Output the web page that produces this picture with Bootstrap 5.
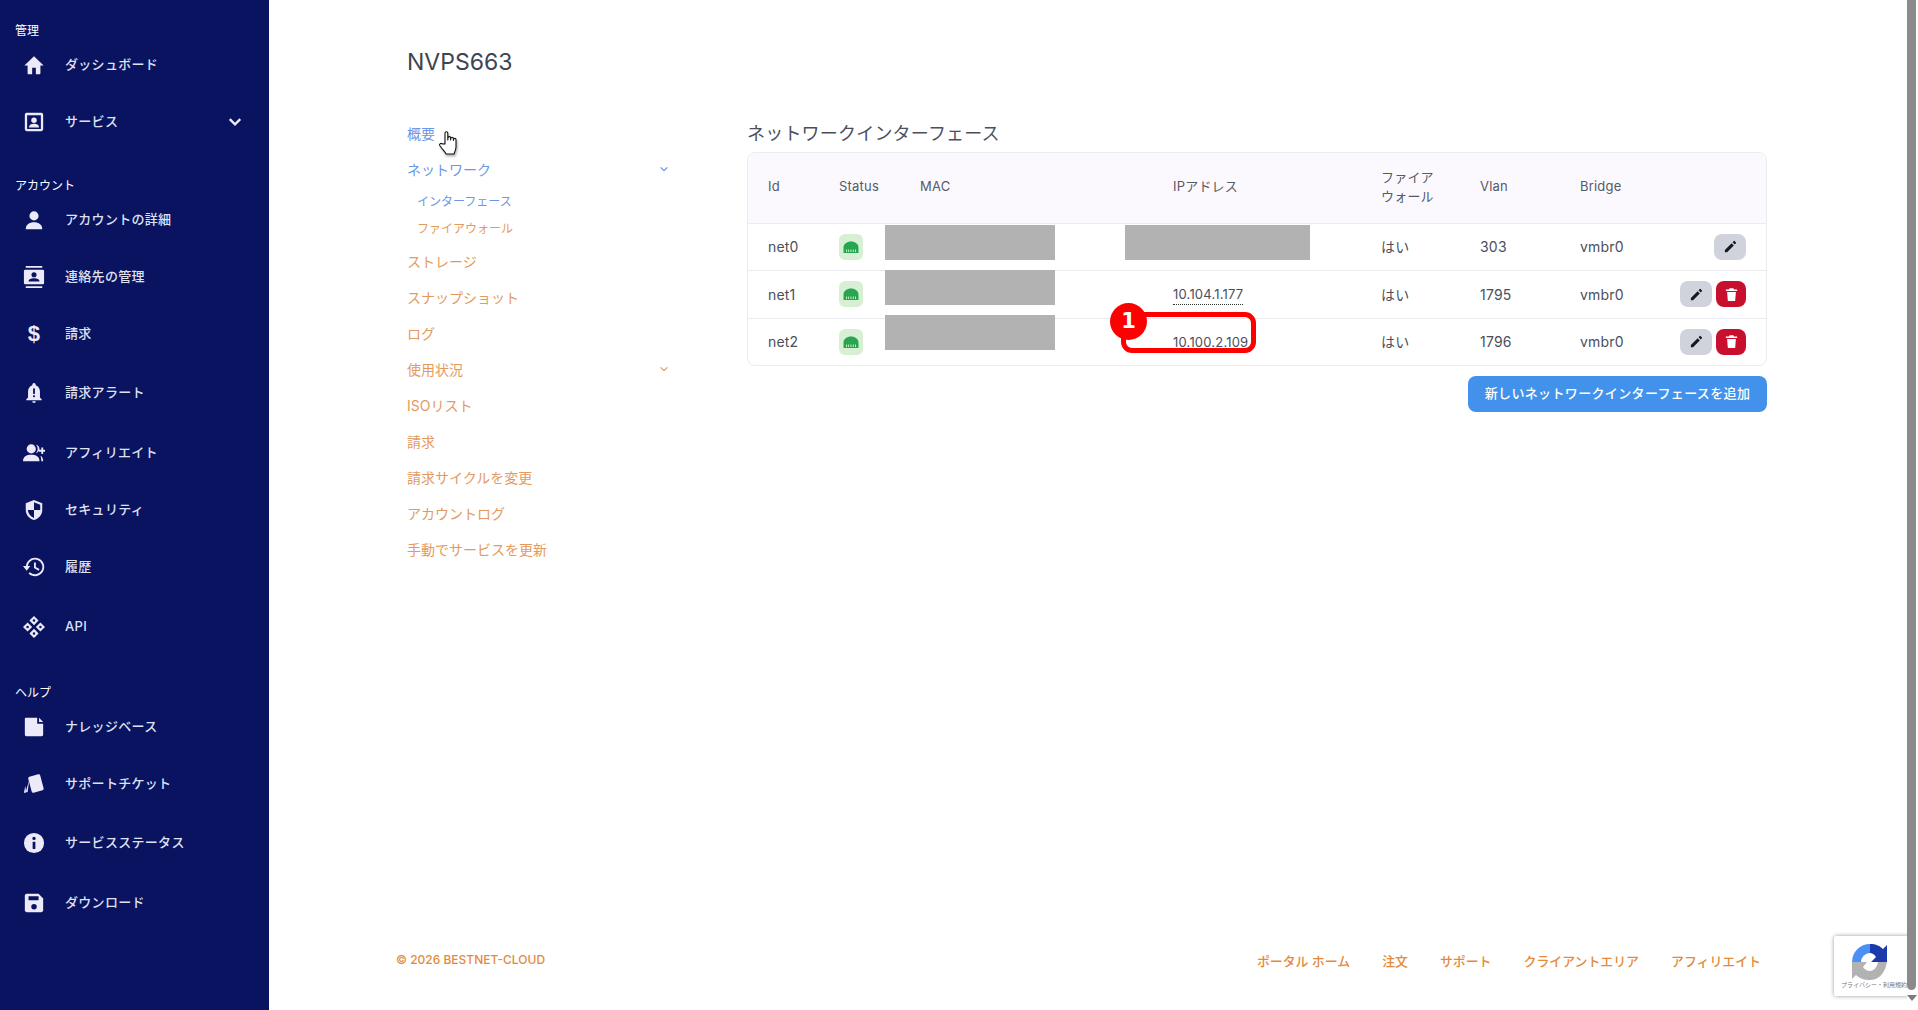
<!DOCTYPE html>
<html lang="ja">
<head>
<meta charset="utf-8">
<title>NVPS663</title>
<link href="https://cdn.jsdelivr.net/npm/bootstrap@5.3.0/dist/css/bootstrap.min.css" rel="stylesheet">
<style>
html,body{height:1010px;overflow:hidden}
body{font-family:Inter,"Noto Sans CJK JP",sans-serif;font-size:14px;color:#4b4f5c;background:#fff}
.app-root{height:1010px;position:relative}
.side-bar{width:269px;flex:none;background:#09135f;padding-top:21px;color:#dfe1f3}
.sb-label{height:20px;line-height:20px;font-size:12px;padding-left:15px;color:#fff}
.sb-label-gap{margin-top:31px}
.sb-label-gap2{margin-top:33px}
.sb-item{height:46px;margin-top:11px;padding-left:23px;font-size:13px;letter-spacing:.3px;font-weight:500;color:#dfe1f3;text-decoration:none}
.sb-item:hover{color:#fff}
.sb-first{margin-top:1px}
.sb-wide{margin-top:14px}
.sb-m13{margin-top:13px}
.sb-ico{width:22px;height:22px;margin-right:20px;flex:none;fill:#eceaf8}
.sb-chev{width:14px;height:14px;margin-left:auto;margin-right:27px;fill:none;stroke:#eceaf8;stroke-width:4}
.sb-dollar{width:22px;margin-right:20px;text-align:center;font-size:22px;font-weight:700;line-height:22px;color:#eceaf8;font-family:"Liberation Sans",sans-serif}
.cut{fill:#09135f}
.main-area{min-width:0}
.top-zone{padding:48px 0 0 138px}
.page-title{font-size:23px;line-height:29px;font-weight:400;margin:0 0 38px;color:#3f4451}
.side-menu{width:262px;margin-right:78px;flex:none}
.menu-link{height:36px;font-size:14px;color:#e39a5f;text-decoration:none}
.menu-link:hover{color:#e39a5f}
.menu-sub{height:28px;padding-left:10px;font-size:12px;color:#e39a5f;text-decoration:none}
.menu-sub:hover{color:#e39a5f}
.menu-sub-first{padding-top:1px}
.is-on,.is-on:hover{color:#6a98e6}
.menu-chev{width:10px;height:10px;margin-left:auto;fill:none;stroke:currentColor;stroke-width:1.5}
.right-col{width:1020px;padding-top:6px}
.sect-title{font-size:18px;line-height:26px;margin:0 0 5px;font-weight:400;color:#4b4f5c;letter-spacing:.2px}
.tbl-frame{border:1px solid #ebebf1;border-radius:8px;overflow:hidden}
.net-table{table-layout:fixed;width:100%;margin:0;--bs-table-color:#4b4f5c;font-size:14px;letter-spacing:.2px}
.net-table th{font-size:13px;font-weight:400;background:#fbf9fe;height:70px;padding:0 0 2px;line-height:19px;vertical-align:middle;border-bottom:1px solid #ebebf1;color:#555a67}
.net-table td{padding:0;vertical-align:middle;border-bottom:1px solid #ebebf1;height:48px}
.net-table tr.row-a td{height:47px}
.net-table tr:last-child td{border-bottom:0;height:47px}
.c-id{width:91px;padding-left:20px!important}
.c-st{width:81px}
.c-mac{width:253px}
.c-ip{width:208px}
.c-fw{width:99px}
.c-vl{width:100px}
.c-br{width:100px}
.ip-dot{border-bottom:1px dotted #333;padding-bottom:2px;font-size:13px}
.ip-plain{font-size:13px}
.stat-box{width:24px;height:26px;background:#d7f0d4;border-radius:6px}
.stat-box svg{width:18px;height:16px;fill:#27a651}
.act-wrap{gap:4px;padding-right:20px}
.act-edit,.act-del{height:26px;padding:0;border:0;border-radius:8px}
.act-edit{width:32px;background:#d1d3dc}
.act-del{width:30px;background:#c8102e}
.act-edit:hover{background:#d1d3dc}
.act-del:hover{background:#c8102e}
.act-edit svg,.act-del svg{width:15px;height:15px}
.act-edit svg{fill:#17181f}
.act-del svg{fill:#fff}
.add-btn{margin-top:10px;height:36px;width:299px;padding:0;background:#4292eb;border:0;border-radius:8px;color:#fff;font-size:13px;letter-spacing:.35px;font-weight:500}
.add-btn:hover{background:#4292eb;color:#fff}
.foot-bar{margin-top:auto;padding:0 146px 38px 127px;font-size:12px;font-weight:500;color:#e58a3c;line-height:20px}
.foot-links{gap:32px;font-size:12.9px;margin-top:5px}
.foot-links a{color:#e58a3c;text-decoration:none}
.scroll-col{width:11px;flex:none;background:#fff;position:relative;z-index:3}
.scroll-thumb{width:9px;height:990px;background:#8b8b8b;border-radius:0 0 5px 5px}
.scroll-arrow{width:0;height:0;margin:5px 0 0 0;border-left:5px solid transparent;border-right:5px solid transparent;border-top:6px solid #7c7c7c}
.mask{position:absolute;background:#b2b2b2}
.m1{left:885px;top:225px;width:170px;height:35px}
.m2{left:885px;top:270px;width:170px;height:35px}
.m3{left:885px;top:315px;width:170px;height:35px}
.m4{left:1125px;top:225px;width:185px;height:35px}
.note-box{position:absolute;left:1121px;top:312px;width:135px;height:41px;border:5.5px solid #f00;border-radius:11px}
.note-num{position:absolute;left:1110px;top:303px;width:37px;height:37px;border-radius:50%;background:#f00;color:#fff;font-family:"DejaVu Sans",sans-serif;font-weight:700;font-size:21px;line-height:37px;text-align:center}
.hand{position:absolute;left:438px;top:130px;width:22px;height:26px;filter:drop-shadow(1px 2px 1px rgba(0,0,0,.3))}
.rc-badge{position:absolute;left:1834px;top:936px;width:84px;height:60px;background:#fff;box-shadow:0 0 4px rgba(0,0,0,.4);border-radius:2px;z-index:2}
.rc-badge svg{display:block;width:38px;height:38px;margin:7px 0 0 17px}
.rc-text{font-size:6px;line-height:8px;color:#777;padding-left:7px;margin-top:0;white-space:nowrap}
</style>
</head>
<body>
<div class="app-root d-flex">
<aside class="side-bar">
  <div class="sb-label">管理</div>
  <a href="#" class="sb-item sb-first d-flex align-items-center"><svg class="sb-ico" viewBox="0 0 24 24"><path d="M12 2.500 1.500 12.500H5V21a1 1 0 0 0 1 1h4v-7h4v7h4a1 1 0 0 0 1-1v-8.500h3.500z"/></svg>ダッシュボード</a>
  <a href="#" class="sb-item d-flex align-items-center"><svg class="sb-ico" viewBox="0 0 24 24"><path fill-rule="evenodd" d="M4 2h16a2 2 0 0 1 2 2v16a2 2 0 0 1-2 2H4a2 2 0 0 1-2-2V4a2 2 0 0 1 2-2zm.500 2.500v15h15v-15z"/><circle cx="12" cy="10" r="3"/><path d="M6.500 18c0-2.800 2.500-4 5.500-4s5.500 1.200 5.500 4z"/></svg>サービス<svg class="sb-chev" viewBox="0 0 24 24"><path d="M3 7l9 9 9-9"/></svg></a>
  <div class="sb-label sb-label-gap">アカウント</div>
  <a href="#" class="sb-item sb-first d-flex align-items-center"><svg class="sb-ico" viewBox="0 0 24 24"><circle cx="12" cy="7.500" r="5"/><path d="M3 22c0-5 4-7.500 9-7.500s9 2.500 9 7.500z"/></svg>アカウントの詳細</a>
  <a href="#" class="sb-item d-flex align-items-center"><svg class="sb-ico" viewBox="0 0 24 24"><path d="M3 0h18v2H3zM3 22h18v2H3z"/><rect x="1" y="4" width="22" height="16" rx="1.500"/><circle class="cut" cx="12" cy="9.500" r="2.800"/><path class="cut" d="M6 17c0-2.500 2.700-3.600 6-3.600s6 1.100 6 3.600z"/></svg>連絡先の管理</a>
  <a href="#" class="sb-item d-flex align-items-center"><span class="sb-dollar">$</span>請求</a>
  <a href="#" class="sb-item sb-m13 d-flex align-items-center"><svg class="sb-ico" viewBox="0 0 24 24"><path d="M12 1a1.800 1.800 0 0 0-1.800 1.800v.8C7 4.600 5.500 7.500 5.500 10.500V17l-2 2v1h17v-1l-2-2v-6.500c0-3-1.500-5.900-4.700-6.900v-.8A1.800 1.800 0 0 0 12 1zM10 21a2 2 0 0 0 4 0z"/><rect class="cut" x="11" y="7" width="2" height="6"/><rect class="cut" x="11" y="14.500" width="2" height="2"/></svg>請求アラート</a>
  <a href="#" class="sb-item sb-wide d-flex align-items-center"><svg class="sb-ico" viewBox="0 0 24 24"><circle cx="9" cy="7.500" r="5"/><path d="M0 21c0-5 4-7 9-7s9 2 9 7z"/><path d="M14 2.800c2.500.8 4 2.700 4 4.700s-1.500 4-4 4.700c1.300-1.300 2-2.900 2-4.700s-.7-3.400-2-4.700zM19 15c2 1 3 3 3 6h-2c0-2.500-.5-4.500-1-6zM20 6h2v2.500h2.500v2H22V13h-2v-2.500h-2.500v-2H20z"/></svg>アフィリエイト</a>
  <a href="#" class="sb-item d-flex align-items-center"><svg class="sb-ico" viewBox="0 0 24 24"><path fill-rule="evenodd" d="M12 1 3 4.500V12c0 5.500 4 9.500 9 11 5-1.500 9-5.500 9-11V4.500zM12 3.500l6.800 2.700V12H12zM5.200 12H12v8.700c-3.500-1.300-6.200-4.500-6.800-8.700z"/></svg>セキュリティ</a>
  <a href="#" class="sb-item d-flex align-items-center"><svg class="sb-ico" viewBox="0 0 24 24"><path d="M13 2A10 10 0 0 0 3.100 11H0l4 5 4-5H5.200a8 8 0 1 1 2.300 6.600L6 19a10 10 0 1 0 7-17z"/><path d="M12 7h2v5l4 2.300-1 1.700-5-3z"/></svg>履歴</a>
  <a href="#" class="sb-item sb-wide d-flex align-items-center"><svg class="sb-ico" viewBox="0 0 24 24"><path fill-rule="evenodd" d="M12 0l5 5-5 5-5-5zM12 3.600A1.400 1.400 0 1 0 12 6.400 1.400 1.400 0 0 0 12 3.600zM12 14l5 5-5 5-5-5zM12 17.600a1.400 1.400 0 1 0 0 2.800 1.400 1.400 0 0 0 0-2.800zM5 7l5 5-5 5-5-5zM5 10.600a1.400 1.400 0 1 0 0 2.800 1.400 1.400 0 0 0 0-2.800zM19 7l5 5-5 5-5-5zM19 10.600a1.400 1.400 0 1 0 0 2.800 1.400 1.400 0 0 0 0-2.800z"/></svg>API</a>
  <div class="sb-label sb-label-gap2">ヘルプ</div>
  <a href="#" class="sb-item sb-first d-flex align-items-center"><svg class="sb-ico" viewBox="0 0 24 24"><path d="M3 2h12.500v6.500H22V20.500a1.500 1.500 0 0 1-1.500 1.500h-17A1.500 1.500 0 0 1 2 20.500V3a1 1 0 0 1 1-1zM17.500 2 22 6.500h-4.500z"/></svg>ナレッジベース</a>
  <a href="#" class="sb-item d-flex align-items-center"><svg class="sb-ico" viewBox="0 0 24 24"><rect x="7.500" y="2.500" width="13.500" height="18" rx="1.800" transform="rotate(-15 14 12)"/><path d="M6.800 7.500 5 21l-2-.6zM2.500 14 1 21.500h2.500z"/></svg>サポートチケット</a>
  <a href="#" class="sb-item sb-m13 d-flex align-items-center"><svg class="sb-ico" viewBox="0 0 24 24"><circle cx="12" cy="12" r="11"/><rect class="cut" x="10.500" y="10.500" width="3" height="8" rx=".5"/><circle class="cut" cx="12" cy="7" r="1.800"/></svg>サービスステータス</a>
  <a href="#" class="sb-item sb-wide d-flex align-items-center"><svg class="sb-ico" viewBox="0 0 24 24"><path d="M4 2h13l5 5v13a2 2 0 0 1-2 2H4a2 2 0 0 1-2-2V4a2 2 0 0 1 2-2z"/><rect class="cut" x="6" y="4.500" width="11" height="4.500" rx=".5"/><circle class="cut" cx="12" cy="16" r="3"/></svg>ダウンロード</a>
</aside>
<main class="main-area flex-grow-1 d-flex flex-column">
  <div class="top-zone">
    <h1 class="page-title">NVPS663</h1>
    <div class="d-flex">
      <nav class="side-menu">
        <a href="#" class="menu-link is-on d-flex align-items-center">概要</a>
        <a href="#" class="menu-link is-on d-flex align-items-center">ネットワーク<svg class="menu-chev" viewBox="0 0 12 12"><path d="M2 4l4 4 4-4"/></svg></a>
        <a href="#" class="menu-sub menu-sub-first is-on d-flex align-items-center">インターフェース</a>
        <a href="#" class="menu-sub d-flex align-items-center">ファイアウォール</a>
        <a href="#" class="menu-link d-flex align-items-center">ストレージ</a>
        <a href="#" class="menu-link d-flex align-items-center">スナップショット</a>
        <a href="#" class="menu-link d-flex align-items-center">ログ</a>
        <a href="#" class="menu-link d-flex align-items-center">使用状況<svg class="menu-chev" viewBox="0 0 12 12"><path d="M2 4l4 4 4-4"/></svg></a>
        <a href="#" class="menu-link d-flex align-items-center">ISOリスト</a>
        <a href="#" class="menu-link d-flex align-items-center">請求</a>
        <a href="#" class="menu-link d-flex align-items-center">請求サイクルを変更</a>
        <a href="#" class="menu-link d-flex align-items-center">アカウントログ</a>
        <a href="#" class="menu-link d-flex align-items-center">手動でサービスを更新</a>
      </nav>
      <section class="right-col">
        <h2 class="sect-title">ネットワークインターフェース</h2>
        <div class="tbl-frame">
          <table class="table net-table">
            <thead><tr><th class="c-id">Id</th><th class="c-st">Status</th><th class="c-mac">MAC</th><th class="c-ip">IPアドレス</th><th class="c-fw">ファイア<br>ウォール</th><th class="c-vl">Vlan</th><th class="c-br">Bridge</th><th></th></tr></thead>
            <tbody>
              <tr class="row-a"><td class="c-id">net0</td><td><div class="stat-box d-flex align-items-center justify-content-center"><svg viewBox="0 0 18 16"><path fill-rule="evenodd" d="M1.500 14V8.500C1.500 5 5 2.500 9 2.500s7.500 2.500 7.500 6V14zM4 10.500V13h.9v-2.500zM6.200 10.500V13h.9v-2.500zM8.500 10.500V13h.9v-2.500zM10.800 10.500V13h.9v-2.500zM13 10.500V13h.9v-2.500z"/></svg></div></td><td></td><td></td><td>はい</td><td>303</td><td>vmbr0</td><td><div class="act-wrap d-flex justify-content-end"><button class="btn act-edit d-flex align-items-center justify-content-center" aria-label="edit"><svg viewBox="0 0 24 24"><path d="M3 17.500V21h3.500L17.300 10.200l-3.500-3.500zM20.700 6.800a1 1 0 0 0 0-1.400l-2.100-2.100a1 1 0 0 0-1.400 0l-1.900 1.900 3.500 3.500z"/></svg></button></div></td></tr>
              <tr><td class="c-id">net1</td><td><div class="stat-box d-flex align-items-center justify-content-center"><svg viewBox="0 0 18 16"><path fill-rule="evenodd" d="M1.500 14V8.500C1.500 5 5 2.500 9 2.500s7.500 2.500 7.500 6V14zM4 10.500V13h.9v-2.500zM6.200 10.500V13h.9v-2.500zM8.500 10.500V13h.9v-2.500zM10.800 10.500V13h.9v-2.500zM13 10.500V13h.9v-2.500z"/></svg></div></td><td></td><td><span class="ip-dot">10.104.1.177</span></td><td>はい</td><td>1795</td><td>vmbr0</td><td><div class="act-wrap d-flex justify-content-end"><button class="btn act-edit d-flex align-items-center justify-content-center" aria-label="edit"><svg viewBox="0 0 24 24"><path d="M3 17.500V21h3.500L17.300 10.200l-3.500-3.500zM20.700 6.800a1 1 0 0 0 0-1.400l-2.100-2.100a1 1 0 0 0-1.400 0l-1.900 1.900 3.500 3.500z"/></svg></button><button class="btn act-del d-flex align-items-center justify-content-center" aria-label="delete"><svg viewBox="0 0 24 24"><path d="M9 2h6l1 2h5v2.500H3V4h5zM5 8h14l-1 13a1.500 1.500 0 0 1-1.500 1.500h-9A1.500 1.500 0 0 1 6 21z"/></svg></button></div></td></tr>
              <tr><td class="c-id">net2</td><td><div class="stat-box d-flex align-items-center justify-content-center"><svg viewBox="0 0 18 16"><path fill-rule="evenodd" d="M1.500 14V8.500C1.500 5 5 2.500 9 2.500s7.500 2.500 7.500 6V14zM4 10.500V13h.9v-2.500zM6.200 10.500V13h.9v-2.500zM8.500 10.500V13h.9v-2.500zM10.800 10.500V13h.9v-2.500zM13 10.500V13h.9v-2.500z"/></svg></div></td><td></td><td><span class="ip-plain">10.100.2.109</span></td><td>はい</td><td>1796</td><td>vmbr0</td><td><div class="act-wrap d-flex justify-content-end"><button class="btn act-edit d-flex align-items-center justify-content-center" aria-label="edit"><svg viewBox="0 0 24 24"><path d="M3 17.500V21h3.500L17.300 10.200l-3.500-3.500zM20.700 6.800a1 1 0 0 0 0-1.400l-2.100-2.100a1 1 0 0 0-1.400 0l-1.900 1.900 3.500 3.500z"/></svg></button><button class="btn act-del d-flex align-items-center justify-content-center" aria-label="delete"><svg viewBox="0 0 24 24"><path d="M9 2h6l1 2h5v2.500H3V4h5zM5 8h14l-1 13a1.500 1.500 0 0 1-1.500 1.500h-9A1.500 1.500 0 0 1 6 21z"/></svg></button></div></td></tr>
            </tbody>
          </table>
        </div>
        <div class="d-flex justify-content-end"><button class="btn add-btn">新しいネットワークインターフェースを追加</button></div>
      </section>
    </div>
  </div>
  <footer class="foot-bar d-flex justify-content-between align-items-center">
    <span>© 2026 BESTNET-CLOUD</span>
    <div class="foot-links d-flex"><a href="#">ポータル ホーム</a><a href="#">注文</a><a href="#">サポート</a><a href="#">クライアントエリア</a><a href="#">アフィリエイト</a></div>
  </footer>
</main>
<div class="scroll-col"><div class="scroll-thumb"></div><div class="scroll-arrow"></div></div>
<div class="mask m1"></div><div class="mask m2"></div><div class="mask m3"></div><div class="mask m4"></div>
<div class="note-box"></div><div class="note-num">1</div>
<svg class="hand" viewBox="0 0 22 26"><path d="M7 14V3.200a1.400 1.400 0 0 1 2.800 0V10l.2-2.200a1.300 1.300 0 0 1 2.600.2v2l.2-1.500a1.300 1.300 0 0 1 2.600.2v1.800l.2-1a1.200 1.200 0 0 1 2.400.2V17c0 3-1.500 5-2 7H8c-.5-1.500-2-3-4-5.500l-2.200-3c-.8-1.200.8-2.800 2.200-1.600z" fill="#fff" stroke="#111" stroke-width="1.100" stroke-linejoin="round"/></svg>
<div class="rc-badge"><svg viewBox="0 0 38 38"><path d="M1 19A18 18 0 0 1 19 1V10A9 9 0 0 0 10 19Z" fill="#4a90f5"/><path d="M19 1C25 1 29 3 32 6L36 2V19H20L25 14C23 11 21 10 19 10Z" fill="#1c3aa9"/><path d="M1 19V36L5 32C9 36 14 37 19 37C28 37 34 30 36 19H27C26 24 23 28 19 28C16 28 13 26 12 24L16 19Z" fill="#b2b2b2"/></svg><div class="rc-text">プライバシー・利用規約</div></div>
</div>
<script src="https://cdn.jsdelivr.net/npm/bootstrap@5.3.0/dist/js/bootstrap.bundle.min.js"></script>
</body>
</html>
